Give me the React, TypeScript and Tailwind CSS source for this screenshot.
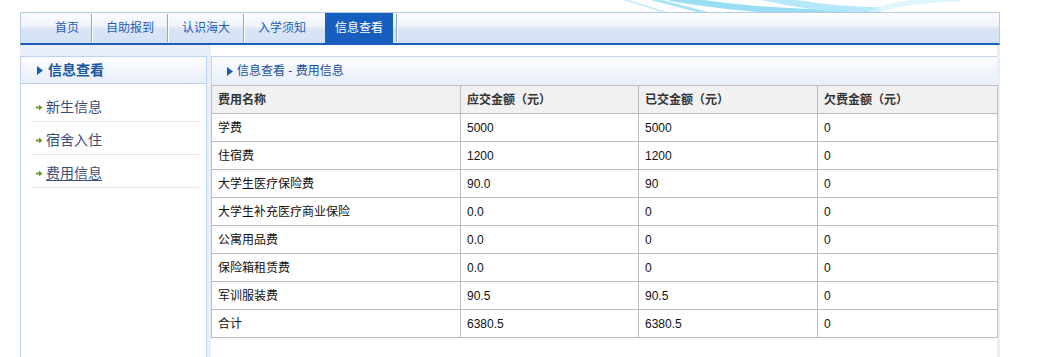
import React from "react"

const tabs = ["首页", "自助报到", "认识海大", "入学须知"]

const sideItems = [
  { label: "新生信息", active: false },
  { label: "宿舍入住", active: false },
  { label: "费用信息", active: true },
]

const rows: [string, string, string, string][] = [
  ["学费", "5000", "5000", "0"],
  ["住宿费", "1200", "1200", "0"],
  ["大学生医疗保险费", "90.0", "90", "0"],
  ["大学生补充医疗商业保险", "0.0", "0", "0"],
  ["公寓用品费", "0.0", "0", "0"],
  ["保险箱租赁费", "0.0", "0", "0"],
  ["军训服装费", "90.5", "90.5", "0"],
  ["合计", "6380.5", "6380.5", "0"],
]

function Sep() {
  return (
    <div className="flex h-[28px] shrink-0 self-center">
      <div className="w-px bg-[#8fa6c6]" />
      <div className="w-px bg-white" />
    </div>
  )
}

function GreenArrow() {
  return (
    <svg width="7" height="7" viewBox="0 0 7 7" className="shrink-0">
      <path d="M0 2.5h3V0.5L6.5 3.5 3 6.5V4.5H0z" fill="#6b9b2f" />
    </svg>
  )
}

function Triangle() {
  return (
    <svg width="6" height="9" viewBox="0 0 6 9" className="shrink-0">
      <path d="M0 0L6 4.5 0 9z" fill="#1a5cb4" />
    </svg>
  )
}

export default function App() {
  return (
    <div
      className="relative h-[357px] w-[1044px] overflow-hidden bg-white"
      style={{ fontFamily: '"Liberation Sans", "Noto Sans CJK SC", sans-serif' }}
    >
      {/* decorative swoosh behind header */}
      <svg className="absolute left-[560px] top-0" width="420" height="14" viewBox="0 0 420 14">
        <path d="M60 -2 L110 14" stroke="#cdeef9" strokeWidth="2" fill="none" />
        <path d="M85 -3 L150 14" stroke="#a9e3f7" strokeWidth="3" fill="none" />
        <path d="M110 -2 C170 8 220 12 290 13" stroke="#9adef6" strokeWidth="6" fill="none" />
        <path d="M200 -4 C240 6 280 10 320 11" stroke="#aee6f8" strokeWidth="7" fill="none" opacity="0.9" />
        <path d="M310 13 C330 4 360 0 400 -1" stroke="#d6f2fb" strokeWidth="5" fill="none" opacity="0.8" />
      </svg>

      <div className="relative ml-5 w-[980px] pt-3">
        {/* Nav */}
        <div className="flex h-[33px] border-x border-t border-[#b6cbe7] border-b-2 border-b-[#1a5ebf] bg-[linear-gradient(to_bottom,#fafcfe_0%,#eef3fb_45%,#dbe6f6_50%,#d3e1f5_100%)] pl-[22px]">
          {tabs.map((t, i) => (
            <React.Fragment key={t}>
              <div
                className={`flex h-full items-center text-[12px] text-[#1d5cb9] ${
                  i === 0 ? "px-[12px]" : "px-[13px]"
                }`}
              >
                {t}
              </div>
              {i < tabs.length - 1 && <Sep />}
            </React.Fragment>
          ))}
          <div className="ml-[6px] mr-[3px] flex h-full items-center bg-[#165fbe] px-[10px] text-[12px] text-white">
            信息查看
          </div>
          <Sep />
        </div>

        {/* Body */}
        <div className="flex h-[312px] bg-[#e8eff9]">
          {/* Sidebar */}
          <div className="mt-[11px] w-[187px] border-x border-[#bcd1ee] bg-white">
            <div className="flex h-[28px] items-center gap-[5px] border-y border-[#bcd1ee] bg-[linear-gradient(to_bottom,#fdfeff,#e7eef9)] pl-[16px]">
              <Triangle />
              <span className="text-[14px] font-bold text-[#1b56a6]">信息查看</span>
            </div>
            <div className="pl-[10px] pr-[7px] pt-[5px]">
              {sideItems.map((it) => (
                <div
                  key={it.label}
                  className="flex h-[33px] items-center gap-[3px] border-b border-[#e3e6ea] pl-[5px] pt-[5px]"
                >
                  <GreenArrow />
                  <span className={`text-[14px] text-[#3b4e77] ${it.active ? "underline underline-offset-2" : ""}`}>
                    {it.label}
                  </span>
                </div>
              ))}
            </div>
          </div>

          {/* Main */}
          <div className="ml-[4px] w-[786px] bg-white pt-[11px]">
            <div className="flex h-[29px] items-center gap-[4px] border-l border-t border-[#c3d5ee] bg-[linear-gradient(to_bottom,#fbfcfe,#e8eff9)] pl-[15px]">
              <Triangle />
              <span className="text-[12px] text-[#1a4f9e]">信息查看 - 费用信息</span>
            </div>
            <table className="w-[786px] table-fixed border-collapse text-[12px]">
              <colgroup>
                <col className="w-[249px]" />
                <col className="w-[178px]" />
                <col className="w-[179px]" />
                <col className="w-[180px]" />
              </colgroup>
              <thead>
                <tr className="h-[28px] bg-[#f1f1f1]">
                  {["费用名称", "应交金额（元）", "已交金额（元）", "欠费金额（元）"].map((h) => (
                    <th key={h} className="border border-[#bdbdbd] px-[6px] text-left font-bold text-[#333]">
                      {h}
                    </th>
                  ))}
                </tr>
              </thead>
              <tbody>
                {rows.map((r) => (
                  <tr key={r[0]} className="h-[28px]">
                    {r.map((c, j) => (
                      <td key={j} className="border border-[#bdbdbd] px-[6px] text-[#111]">
                        {c}
                      </td>
                    ))}
                  </tr>
                ))}
              </tbody>
            </table>
          </div>
        </div>
      </div>
    </div>
  )
}
